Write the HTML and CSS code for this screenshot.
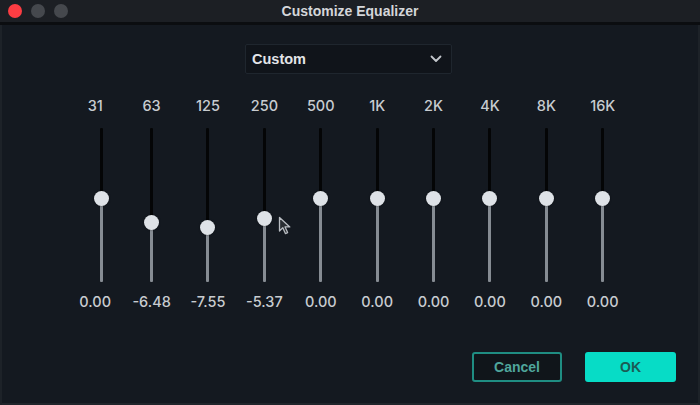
FILE: index.html
```html
<!DOCTYPE html>
<html lang="en">
<head>
  <meta charset="UTF-8">
  <meta name="viewport" content="width=device-width, initial-scale=1.0">
  <title>Customize Equalizer</title>
  <link rel="stylesheet" href="styles.css">
</head>
<body>
  <div class="window">
    <div class="titlebar">
      <div class="lights">
        <span class="light close"></span>
        <span class="light"></span>
        <span class="light"></span>
      </div>
      <div class="title">Customize Equalizer</div>
    </div>

    <div class="content">
      <div class="preset">
        <span>Custom</span>
        <svg class="chevron" width="12" height="8" viewBox="0 0 12 8">
          <polyline points="1.5,1.5 6,6 10.5,1.5" fill="none" stroke="#c3c7cc" stroke-width="1.8" stroke-linecap="round" stroke-linejoin="round"/>
        </svg>
      </div>

      <div class="bands">
        <!-- knob position: 0 dB sits at 70px, about 3.75px per dB below -->
        <div class="band first">
          <div class="freq">31</div>
          <div class="slider" style="--knob: 70px"><span class="knob"></span></div>
          <div class="gain">0.00</div>
        </div>
        <div class="band">
          <div class="freq">63</div>
          <div class="slider" style="--knob: 94px"><span class="knob"></span></div>
          <div class="gain">-6.48</div>
        </div>
        <div class="band">
          <div class="freq">125</div>
          <div class="slider" style="--knob: 99px"><span class="knob"></span></div>
          <div class="gain">-7.55</div>
        </div>
        <div class="band">
          <div class="freq">250</div>
          <div class="slider" style="--knob: 90px"><span class="knob"></span></div>
          <div class="gain">-5.37</div>
        </div>
        <div class="band">
          <div class="freq">500</div>
          <div class="slider" style="--knob: 70px"><span class="knob"></span></div>
          <div class="gain">0.00</div>
        </div>
        <div class="band">
          <div class="freq">1K</div>
          <div class="slider" style="--knob: 70px"><span class="knob"></span></div>
          <div class="gain">0.00</div>
        </div>
        <div class="band">
          <div class="freq">2K</div>
          <div class="slider" style="--knob: 70px"><span class="knob"></span></div>
          <div class="gain">0.00</div>
        </div>
        <div class="band">
          <div class="freq">4K</div>
          <div class="slider" style="--knob: 70px"><span class="knob"></span></div>
          <div class="gain">0.00</div>
        </div>
        <div class="band">
          <div class="freq">8K</div>
          <div class="slider" style="--knob: 70px"><span class="knob"></span></div>
          <div class="gain">0.00</div>
        </div>
        <div class="band">
          <div class="freq">16K</div>
          <div class="slider" style="--knob: 70px"><span class="knob"></span></div>
          <div class="gain">0.00</div>
        </div>
      </div>

      <div class="actions">
        <button class="btn cancel">Cancel</button>
        <button class="btn ok">OK</button>
      </div>
    </div>

    <!-- mouse pointer -->
    <svg class="pointer" width="14" height="20" viewBox="0 0 14 20">
      <path d="M1.5 1.5 L1.5 15 L4.8 11.8 L7.4 17.6 L9.6 16.6 L7.1 10.9 L11.8 10.9 Z" fill="#2a2e33" stroke="#b9bdc2" stroke-width="1.3" stroke-linejoin="round"/>
    </svg>
  </div>
</body>
</html>
```

FILE: styles.css
```css
body {
  margin: 0;
  background-color: #141920;
  font-family: 'Liberation Sans', Arial, sans-serif;
}
.window {
  position: relative;
  width: 700px;
  height: 405px;
  background-color: #141920;
  box-shadow: inset 2px 0 0 #1d2228, inset -2px 0 0 #1d2228, inset 0 -2px 0 #20252b;
  overflow: hidden;
}
.titlebar {
  position: relative;
  height: 22px;
  background-color: #1c1f24;
  border-bottom: 3px solid #0b0d10;
  display: flex;
  align-items: center;
}
.lights {
  display: flex;
  gap: 9px;
  padding-left: 8px;
}
.light {
  width: 14px;
  height: 14px;
  border-radius: 50%;
  background-color: #45484d;
}
.light.close {
  background-color: #fc3d43;
}
.title {
  position: absolute;
  left: 0;
  right: 0;
  text-align: center;
  color: #d4d6d9;
  font-size: 14px;
  font-weight: bold;
  line-height: 22px;
}
.content {
  padding-top: 19px;
}
.preset {
  width: 207px;
  height: 30px;
  box-sizing: border-box;
  margin-left: 245px;
  background-color: #10141a;
  border: 1px solid #1f262e;
  border-radius: 2px;
  display: flex;
  align-items: center;
  justify-content: space-between;
  padding: 0 9px 0 6px;
  color: #e3e5e8;
  font-size: 14.5px;
  font-weight: bold;
}
.chevron {
  display: block;
}
.bands {
  display: grid;
  grid-template-columns: repeat(10, 56.4px);
  padding-left: 67px;
  margin-top: 23px;
}
.band {
  display: flex;
  flex-direction: column;
  align-items: center;
}
.freq,
.gain {
  color: #c8ccd0;
  font-family: Inter, 'Liberation Sans', sans-serif;
  font-size: 14.5px;
  line-height: 18px;
  font-weight: 500;
}
.slider {
  position: relative;
  width: 15px;
  height: 154px;
  margin-top: 13px;
  margin-bottom: 11px;
}
.band.first .slider {
  margin-left: 12px;
}
.slider::before {
  content: '';
  position: absolute;
  left: 6px;
  top: 0;
  bottom: 0;
  width: 3px;
  border-radius: 1px;
  background: linear-gradient(to bottom, #040506 0, #040506 var(--knob), #868c93 var(--knob), #868c93 100%);
}
.knob {
  position: absolute;
  left: 0;
  top: calc(var(--knob) - 7.5px);
  width: 15px;
  height: 15px;
  border-radius: 50%;
  background-color: #dee2e7;
  box-shadow: 0 0 2px rgba(0, 0, 0, 0.5);
}
.actions {
  display: flex;
  justify-content: flex-end;
  gap: 23px;
  padding-right: 24px;
  margin-top: 41px;
}
.btn {
  width: 91px;
  height: 30px;
  border-radius: 3px;
  font-family: 'Liberation Sans', Arial, sans-serif;
  font-size: 14px;
  font-weight: bold;
  cursor: pointer;
}
.btn.cancel {
  background-color: #10151a;
  border: 2px solid #1f8d82;
  color: #4fa69c;
  width: 90px;
}
.btn.ok {
  background-color: #07dcc6;
  border: none;
  color: #1b5c55;
}
.pointer {
  position: absolute;
  left: 278px;
  top: 216px;
}
```
